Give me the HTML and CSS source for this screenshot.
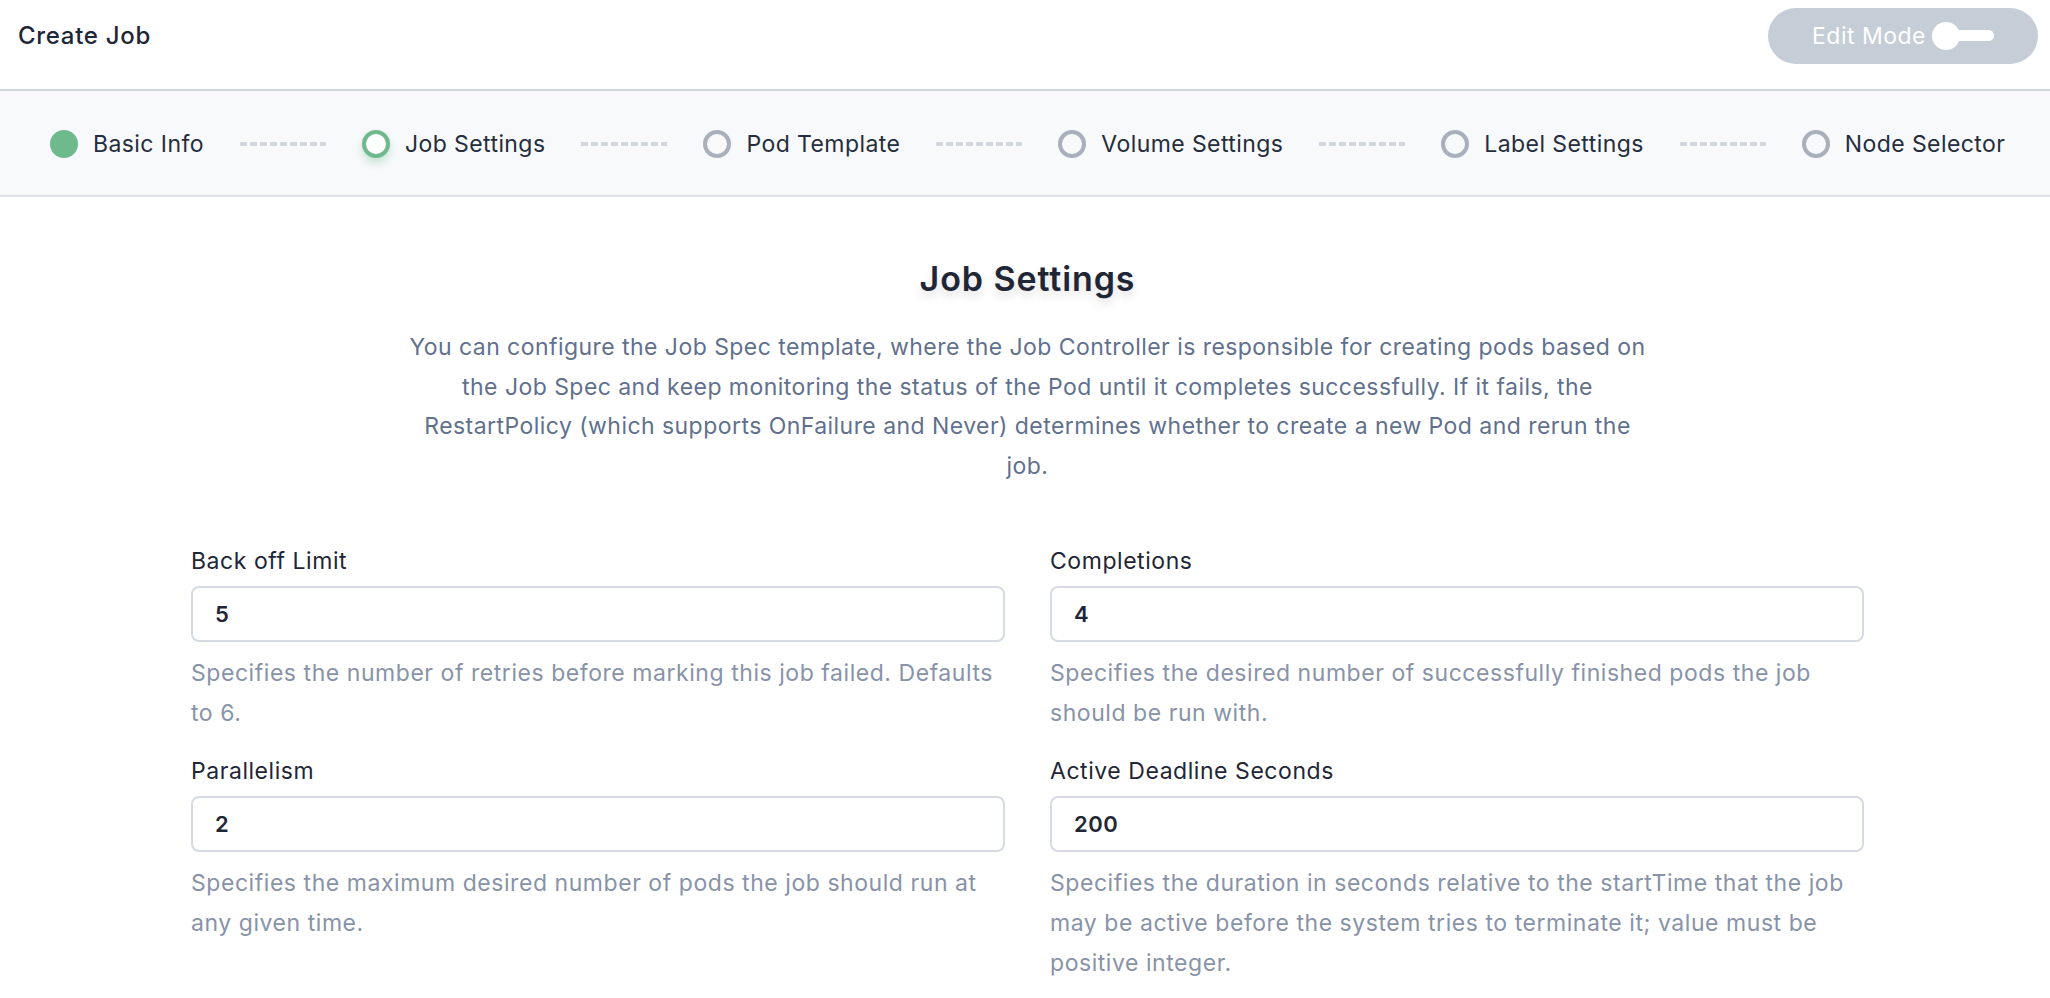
FILE: index.html
```html
<!DOCTYPE html>
<html lang="en">
<head>
<meta charset="utf-8">
<title>Create Job</title>
<link rel="stylesheet" href="styles.css">
</head>
<body>
<header class="topbar">
  <h1 class="page-title">Create Job</h1>
  <button class="edit-mode" type="button">
    <span class="edit-label">Edit Mode</span>
    <span class="toggle"><span class="toggle-knob"></span><span class="toggle-track"></span></span>
  </button>
</header>

<nav class="steps">
  <div class="step done"><span class="dot"></span><span class="step-text">Basic Info</span></div>
  <span class="dash"></span>
  <div class="step active"><span class="dot"></span><span class="step-text">Job Settings</span></div>
  <span class="dash"></span>
  <div class="step"><span class="dot"></span><span class="step-text">Pod Template</span></div>
  <span class="dash"></span>
  <div class="step"><span class="dot"></span><span class="step-text">Volume Settings</span></div>
  <span class="dash"></span>
  <div class="step"><span class="dot"></span><span class="step-text">Label Settings</span></div>
  <span class="dash"></span>
  <div class="step"><span class="dot"></span><span class="step-text">Node Selector</span></div>
</nav>

<main class="main">
  <section class="content">
    <h2 class="section-title">Job Settings</h2>
    <p class="section-desc">You can configure the Job Spec template, where the Job Controller is responsible for creating pods based on the Job Spec and keep monitoring the status of the Pod until it completes successfully. If it fails, the RestartPolicy (which supports OnFailure and Never) determines whether to create a new Pod and rerun the job.</p>

    <div class="form-grid">
      <div class="field">
        <label class="field-label">Back off Limit</label>
        <div class="input">5</div>
        <p class="help">Specifies the number of retries before marking this job failed. Defaults to 6.</p>
      </div>
      <div class="field">
        <label class="field-label">Completions</label>
        <div class="input">4</div>
        <p class="help">Specifies the desired number of successfully finished pods the job should be run with.</p>
      </div>
      <div class="field">
        <label class="field-label">Parallelism</label>
        <div class="input">2</div>
        <p class="help">Specifies the maximum desired number of pods the job should run at any given time.</p>
      </div>
      <div class="field">
        <label class="field-label">Active Deadline Seconds</label>
        <div class="input">200</div>
        <p class="help">Specifies the duration in seconds relative to the startTime that the job may be active before the system tries to terminate it; value must be positive integer.</p>
      </div>
    </div>
  </section>
</main>
</body>
</html>
```

FILE: styles.css
```css
* { box-sizing: border-box; }

html, body {
  margin: 0;
  padding: 0;
  background: #ffffff;
  font-family: Inter, "Noto Sans", "Liberation Sans", sans-serif;
  color: #1f2636;
}

.topbar {
  height: 91px;
  display: flex;
  align-items: center;
  justify-content: space-between;
  padding: 0 12px 0 18px;
  border-bottom: 2px solid #cdd4dc;
}

.page-title {
  margin: 0 0 18px 0;
  font-size: 24px;
  font-weight: 500;
  color: #1f2636;
  letter-spacing: 0.7px;
}

.edit-mode {
  width: 270px;
  height: 56px;
  border: none;
  border-radius: 28px;
  background: #c5cdd6;
  display: flex;
  align-items: center;
  padding: 0 0 0 44px;
  margin-bottom: 18px;
  font-family: inherit;
  cursor: pointer;
}

.edit-label {
  color: #ffffff;
  font-size: 23px;
  font-weight: 400;
  letter-spacing: 0.5px;
}

.toggle {
  display: flex;
  align-items: center;
  margin-left: 6px;
}

.toggle-knob {
  width: 28px;
  height: 28px;
  border-radius: 50%;
  background: #ffffff;
}

.toggle-track {
  width: 38px;
  height: 11px;
  margin-left: -4px;
  border-radius: 0 6px 6px 0;
  background: #ffffff;
}

.steps {
  height: 106px;
  background: #f8f9fb;
  border-bottom: 2px solid #dfe3e8;
  display: flex;
  align-items: center;
  padding: 2px 0 0 50px;
}

.step {
  display: flex;
  align-items: center;
  gap: 15px;
}

.dot {
  width: 28px;
  height: 28px;
  border-radius: 50%;
  border: 4px solid #a9b0bb;
  background: transparent;
  flex: none;
}

.step.done .dot {
  background: #6fba8c;
  border-color: #6fba8c;
}

.step.active .dot {
  background: #ffffff;
  border-color: #6fba8c;
  box-shadow: 0 5px 8px rgba(111, 186, 140, 0.35);
}

.step-text {
  font-size: 23px;
  color: #252d3d;
  letter-spacing: 0.42px;
  white-space: nowrap;
}

.dash {
  width: 86px;
  height: 4px;
  margin: 0 36px;
  flex: none;
  background: repeating-linear-gradient(90deg, #d2d6dd 0 7px, transparent 7px 10px);
}

.main {
  padding: 0 0 0 5px;
}

.content {
  width: 1673px;
  margin: 0 auto;
  padding-top: 56px;
}

.section-title {
  margin: 0;
  text-align: center;
  font-size: 34px;
  font-weight: 600;
  color: #1f2636;
  line-height: 52px;
  letter-spacing: 0.9px;
  text-shadow: 0 6px 8px rgba(0, 0, 0, 0.12);
}

.section-desc {
  width: 1240px;
  margin: 23px auto 0;
  text-align: center;
  font-size: 23px;
  line-height: 39.5px;
  letter-spacing: 0.45px;
  color: #61708d;
}

.form-grid {
  margin-top: 60px;
  display: grid;
  grid-template-columns: 1fr 1fr;
  column-gap: 45px;
  row-gap: 23px;
}

.field {
  display: flex;
  flex-direction: column;
}

.field-label {
  font-size: 23px;
  line-height: 30px;
  letter-spacing: 0.55px;
  color: #1f2636;
  margin-bottom: 10px;
}

.input {
  height: 56px;
  border: 2px solid #d5dae3;
  border-radius: 8px;
  padding: 0 22px;
  display: flex;
  align-items: center;
  font-size: 22px;
  font-weight: 600;
  letter-spacing: 0.5px;
  color: #1f2636;
}

.help {
  margin: 11px 0 0 0;
  font-size: 23px;
  line-height: 40px;
  letter-spacing: 0.55px;
  color: #8893a8;
  min-height: 80px;
}
```
